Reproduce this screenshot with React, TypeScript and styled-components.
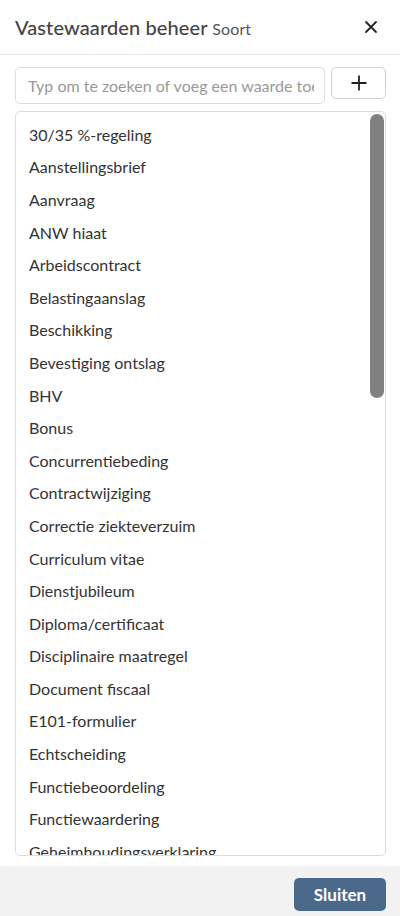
import React, { useLayoutEffect, useRef, useState } from "react";
import styled, { createGlobalStyle } from "styled-components";

const items: string[] = [
  "30/35 %-regeling",
  "Aanstellingsbrief",
  "Aanvraag",
  "ANW hiaat",
  "Arbeidscontract",
  "Belastingaanslag",
  "Beschikking",
  "Bevestiging ontslag",
  "BHV",
  "Bonus",
  "Concurrentiebeding",
  "Contractwijziging",
  "Correctie ziekteverzuim",
  "Curriculum vitae",
  "Dienstjubileum",
  "Diploma/certificaat",
  "Disciplinaire maatregel",
  "Document fiscaal",
  "E101-formulier",
  "Echtscheiding",
  "Functiebeoordeling",
  "Functiewaardering",
  "Geheimhoudingsverklaring",
  "Gezondheidsverklaring",
  "Identiteitsbewijs",
  "Inschrijving KvK",
  "Jaaropgaaf",
  "Kopie paspoort",
  "Leaseovereenkomst",
  "Leningsovereenkomst",
  "Loonbeslag",
  "Loonstrook",
  "Loonheffingsverklaring",
  "Medische keuring",
  "Ontslagbrief",
  "Ouderschapsverlof",
  "Overeenkomst",
  "Pensioen",
  "Personeelsgids",
  "Proeftijd",
  "Promotie",
  "Referentie",
  "Reiskostenvergoeding",
  "Salariswijziging",
  "Scholing",
  "Sollicitatiebrief",
  "Studiekostenregeling",
  "Telefoonregeling",
  "Uitdiensttreding",
  "UWV",
  "Verklaring omtrent gedrag",
  "Verlof",
  "Verzuimmelding",
  "Vaststellingsovereenkomst",
  "Werkgeversverklaring",
  "Werkvergunning",
  "WIA",
  "Ziekmelding",
  "Zwangerschapsverlof",
];

const GlobalStyle = createGlobalStyle`
  html, body {
    margin: 0;
    padding: 0;
    background: #ffffff;
  }
  body {
    font-family: "Lato", "Noto Sans", sans-serif;
    color: #333;
  }
  * {
    box-sizing: border-box;
  }
`;

const App = () => {
  const [query, setQuery] = useState<string>("");
  const [thumb, setThumb] = useState({ top: 0, height: 0 });
  const listRef = useRef<HTMLDivElement>(null);

  const shown = items.filter((i) =>
    i.toLowerCase().includes(query.toLowerCase())
  );

  //keep the drawn scrollbar thumb in step with the list
  const updateThumb = () => {
    const el = listRef.current;
    if (!el) return;
    const track = el.clientHeight - 4;
    if (el.scrollHeight <= el.clientHeight) {
      setThumb({ top: 0, height: 0 });
      return;
    }
    const height = Math.max(30, (el.clientHeight / el.scrollHeight) * track);
    const max = el.scrollHeight - el.clientHeight;
    const top = 2 + (el.scrollTop / max) * (track - height);
    setThumb({ top, height });
  };

  useLayoutEffect(() => {
    updateThumb();
  }, [shown.length]);

  return (
    <>
      <GlobalStyle />
      <Modal>
        <Header>
          <Title>
            Vastewaarden beheer <Sub>Soort</Sub>
          </Title>
          <CloseButton aria-label="Sluiten">
            <svg width="14" height="14" viewBox="0 0 14 14">
              <path
                d="M2 2 L12 12 M12 2 L2 12"
                stroke="#222"
                strokeWidth="1.8"
                strokeLinecap="round"
              />
            </svg>
          </CloseButton>
        </Header>
        <Body>
          <SearchRow>
            <SearchInput
              value={query}
              placeholder="Typ om te zoeken of voeg een waarde toe"
              onChange={(e) => setQuery(e.target.value)}
            />
            <AddButton aria-label="Toevoegen">
              <svg width="18" height="18" viewBox="0 0 18 18">
                <path
                  d="M9 1.5 V16.5 M1.5 9 H16.5"
                  stroke="#222"
                  strokeWidth="1.8"
                />
              </svg>
            </AddButton>
          </SearchRow>
          <ListBox>
            <List ref={listRef} onScroll={updateThumb}>
              {shown.map((item) => (
                <Item key={item}>{item}</Item>
              ))}
            </List>
            {thumb.height > 0 && (
              <Thumb style={{ top: thumb.top, height: thumb.height }} />
            )}
          </ListBox>
        </Body>
        <Footer>
          <PrimaryButton>Sluiten</PrimaryButton>
        </Footer>
      </Modal>
    </>
  );
};

export default App;

//styled-components

const Modal = styled.div`
  width: 400px;
  height: 916px;
  display: flex;
  flex-direction: column;
  background: #fff;
`;

const Header = styled.div`
  height: 55px;
  flex: none;
  display: flex;
  align-items: center;
  justify-content: space-between;
  padding: 0 22px 0 15px;
  border-bottom: 1px solid #eaeaea;
`;

const Title = styled.h1`
  margin: 0;
  font-family: "Lato", "Noto Sans", sans-serif;
  font-weight: 500;
  font-size: 20px;
  color: #444;
  letter-spacing: 0.1px;
`;

const Sub = styled.span`
  font-size: 16px;
  font-weight: 400;
  color: #555;
`;

const CloseButton = styled.button`
  border: none;
  background: none;
  padding: 0;
  cursor: pointer;
  display: flex;
`;

const Body = styled.div`
  flex: 1;
  min-height: 0;
  display: flex;
  flex-direction: column;
  gap: 7px;
  padding: 12px 14px 10px 15px;
`;

const SearchRow = styled.div`
  display: flex;
  gap: 6px;
  align-items: flex-start;
`;

const SearchInput = styled.input`
  flex: 1;
  min-width: 0;
  height: 37px;
  border: 1px solid #dcdcdc;
  border-radius: 5px;
  padding: 0 10px 0 12px;
  font-family: "Lato", "Noto Sans", sans-serif;
  font-size: 16px;
  color: #333;
  outline: none;

  &::placeholder {
    color: #999;
  }
`;

const AddButton = styled.button`
  width: 55px;
  height: 32px;
  border: 1px solid #cfcfcf;
  border-radius: 5px;
  background: #fff;
  display: flex;
  align-items: center;
  justify-content: center;
  cursor: pointer;
`;

const ListBox = styled.div`
  flex: 1;
  min-height: 0;
  position: relative;
  border: 1px solid #dcdcdc;
  border-radius: 5px;
  overflow: hidden;
`;

const List = styled.div`
  height: 100%;
  overflow-y: auto;
  padding: 6px 0;
  scrollbar-width: none;

  &::-webkit-scrollbar {
    display: none;
  }
`;

const Thumb = styled.div`
  position: absolute;
  right: 1px;
  width: 14px;
  background: #808080;
  border-radius: 7px;
  pointer-events: none;
`;

const Item = styled.div`
  height: 32.6px;
  display: flex;
  align-items: center;
  padding: 0 13px;
  font-size: 16px;
  color: #333;
  cursor: pointer;
`;

const Footer = styled.div`
  height: 50px;
  flex: none;
  background: #f2f2f2;
  display: flex;
  align-items: center;
  justify-content: flex-end;
  padding: 0 14px;
`;

const PrimaryButton = styled.button`
  width: 92px;
  height: 33px;
  border: none;
  border-radius: 5px;
  background: #4b6a8b;
  color: #fff;
  font-family: "Lato", "Noto Sans", sans-serif;
  font-weight: 700;
  font-size: 17px;
  cursor: pointer;
  margin-top: 6px;
`;
